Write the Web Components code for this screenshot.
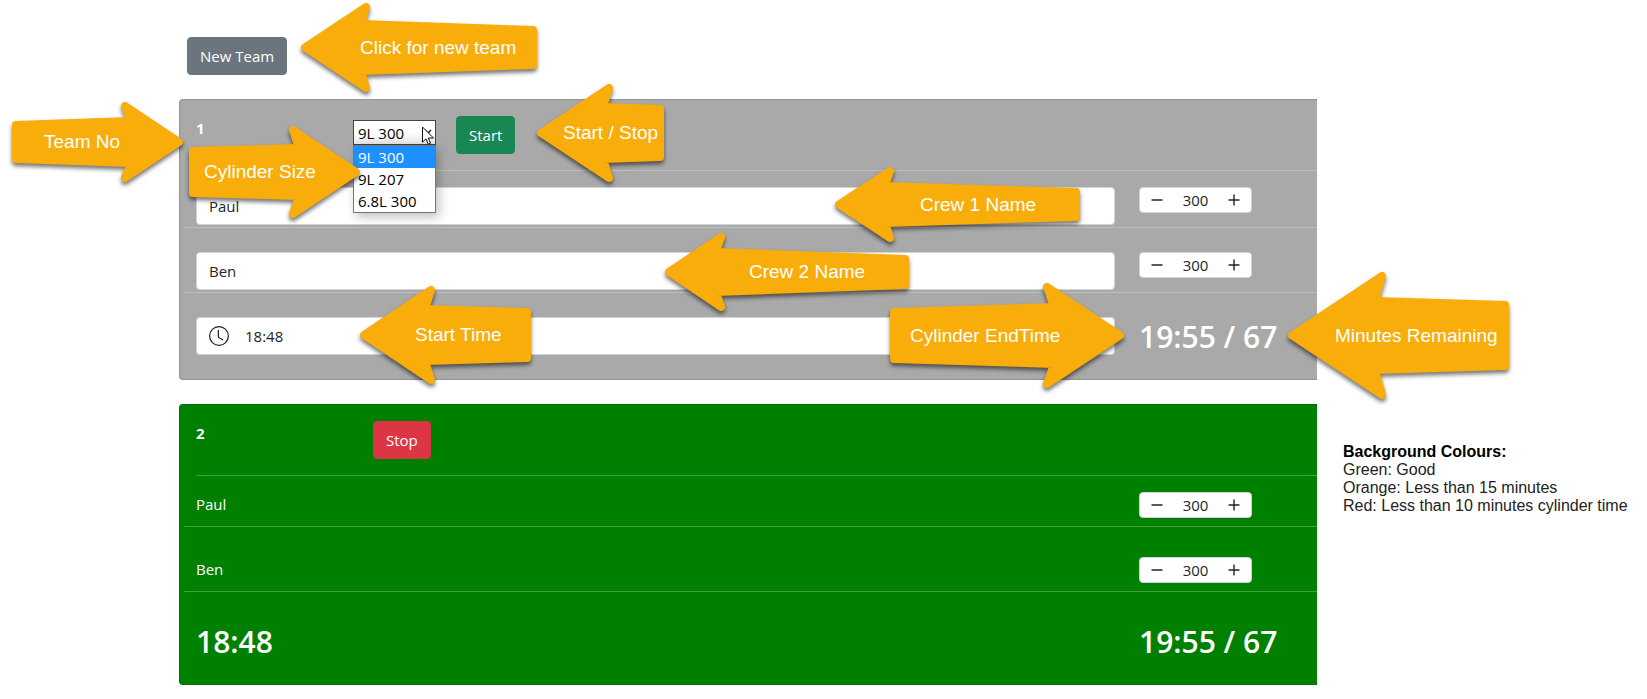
<!DOCTYPE html>
<html lang="en">
<head>
<meta charset="utf-8">
<title>Team cylinder timers</title>
<style>
  body { margin: 0; background: #fff; color: #212529; font: 15px/24px "Open Sans", "Noto Sans", sans-serif; }
</style>
</head>
<body>
<team-board>
  <action-button slot="toolbar" kind="secondary">New Team</action-button>

  <team-card number="1" state="idle">
    <cylinder-select slot="cylinder"></cylinder-select>
    <action-button slot="action" kind="success">Start</action-button>
    <text-field slot="crew1" label="Crew 1 name" value="Paul"></text-field>
    <pressure-stepper slot="pressure1" value="300" label="Crew 1 pressure"></pressure-stepper>
    <text-field slot="crew2" label="Crew 2 name" value="Ben"></text-field>
    <pressure-stepper slot="pressure2" value="300" label="Crew 2 pressure"></pressure-stepper>
    <text-field slot="start" label="Start time" value="18:48" icon="clock"></text-field>
    <big-time slot="end">19:55 / 67</big-time>
  </team-card>

  <team-card number="2" state="good">
    <action-button slot="action" kind="danger">Stop</action-button>
    <span slot="crew1">Paul</span>
    <pressure-stepper slot="pressure1" value="300" label="Crew 1 pressure"></pressure-stepper>
    <span slot="crew2">Ben</span>
    <pressure-stepper slot="pressure2" value="300" label="Crew 2 pressure"></pressure-stepper>
    <big-time slot="start">18:48</big-time>
    <big-time slot="end">19:55 / 67</big-time>
  </team-card>

  <colour-legend slot="aside"></colour-legend>

  <call-out slot="notes" points="left"  left="301" top="3"   width="236" height="89"  barb="69" notch="65" shoulder="17" tail="23" lead="59">Click for new team</call-out>
  <call-out slot="notes" points="right" left="12"  top="102" width="171" height="80"  barb="62" notch="57" shoulder="15" tail="19" lead="32">Team No</call-out>
  <call-out slot="notes" points="right" left="189" top="126" width="171" height="92"  barb="71" notch="66" shoulder="18" tail="21" lead="15">Cylinder Size</call-out>
  <call-out slot="notes" points="left"  left="537" top="84"  width="127" height="98"  barb="76" notch="71" shoulder="19" tail="21" lead="26">Start / Stop</call-out>
  <call-out slot="notes" points="left"  right="567" top="167" width="245" height="75" barb="59" notch="55" shoulder="15" tail="21" lead="85">Crew 1 Name</call-out>
  <call-out slot="notes" points="left"  right="738" top="233" width="244" height="78" barb="60" notch="56" shoulder="15" tail="22" lead="84">Crew 2 Name</call-out>
  <call-out slot="notes" points="left"  left="360" top="286" width="171" height="98"  barb="75" notch="70" shoulder="19" tail="22" lead="55">Start Time</call-out>
  <call-out slot="notes" points="right" right="523" top="283" width="234" height="105" barb="81" notch="75" shoulder="20" tail="25" lead="20">Cylinder EndTime</call-out>
  <call-out slot="notes" points="left"  right="138" top="272" width="221" height="127" barb="98" notch="92" shoulder="25" tail="29" lead="47">Minutes Remaining</call-out>
</team-board>

<script>
class BaseElement extends HTMLElement {
  render(html) {
    if (!this.shadowRoot) this.attachShadow({ mode: "open" });
    this.shadowRoot.innerHTML = html;
  }
  attr(name) { return this.getAttribute(name) || ""; }
  num(name) { return Number(this.getAttribute(name)); }
}

customElements.define("team-board", class extends BaseElement {
  connectedCallback() {
    this.render(`
      <style>
        :host { display: grid; grid-template-columns: minmax(0, 1fr) 330px; position: relative; padding: 37px 0 14px 179px; }
        main { display: flex; flex-direction: column; gap: 24px; min-width: 0; }
        .toolbar { display: flex; padding-left: 8px; }
        aside { padding: 405px 0 0 26px; }
      </style>
      <main>
        <div class="toolbar"><slot name="toolbar"></slot></div>
        <slot></slot>
      </main>
      <aside><slot name="aside"></slot></aside>
      <slot name="notes"></slot>`);
  }
});

customElements.define("action-button", class extends BaseElement {
  connectedCallback() {
    const colour = { secondary: "#6c757d", success: "#198754", danger: "#dc3545" }[this.attr("kind")];
    this.render(`
      <style>
        :host { display: inline-block; }
        button { display: block; border: 1px solid ${colour}; border-radius: 4px; background: ${colour};
          color: #fff; font: inherit; line-height: 24px; padding: 6px 12px; white-space: nowrap; }
      </style>
      <button type="button"><slot></slot></button>`);
  }
});

customElements.define("team-card", class extends BaseElement {
  connectedCallback() {
    const idle = this.attr("state") === "idle";
    this.render(`
      <style>
        :host { display: block; color: #fff; background: ${idle ? "#a9a9a9" : "#008000"};
          border: 1px solid rgba(0, 0, 0, .125); border-right: 0; border-radius: 4px 0 0 4px; padding: 16px 0 0 16px; }
        header { display: flex; align-items: flex-start; padding-bottom: 16px; border-bottom: 1px solid rgba(255, 255, 255, .25); margin-bottom: 16px; }
        h2 { margin: 0; flex: 0 0 157px; font-size: 15px; line-height: 24px; font-weight: 700; }
        .action { margin-left: 20px; }
        .row { display: grid; grid-template-columns: minmax(0, 1fr) 178px; column-gap: 24px; align-items: start;
          margin-left: -12px; padding-left: 12px; }
        .crew { height: ${idle ? 40 : 34}px; border-bottom: 1px solid rgba(255, 255, 255, .25); margin-bottom: ${idle ? 24 : 30}px; }
        .times { min-height: 62px; }
      </style>
      <header>
        <h2>${this.attr("number")}</h2>
        <slot name="cylinder"></slot>
        <div class="action"><slot name="action"></slot></div>
      </header>
      <div class="row crew"><slot name="crew1"></slot><slot name="pressure1"></slot></div>
      <div class="row crew"><slot name="crew2"></slot><slot name="pressure2"></slot></div>
      <div class="row times"><slot name="start"></slot><slot name="end"></slot></div>`);
  }
});

customElements.define("text-field", class extends BaseElement {
  connectedCallback() {
    const clock = this.attr("icon") === "clock" ? `
      <svg width="20" height="20" viewBox="0 0 16 16" fill="#212529" aria-hidden="true">
        <path d="M8 3.5a.5.5 0 0 0-1 0V9a.5.5 0 0 0 .252.434l3.5 2a.5.5 0 0 0 .496-.868L8 8.71V3.5z"/>
        <path d="M8 16A8 8 0 1 0 8 0a8 8 0 0 0 0 16zm7-8A7 7 0 1 1 1 8a7 7 0 0 1 14 0z"/>
      </svg>` : "";
    this.render(`
      <style>
        :host { display: block; }
        label { display: flex; align-items: center; gap: 16px; box-sizing: border-box; height: 38px;
          padding: 0 12px; background: #fff; border: 1px solid #ced4da; border-radius: 4px; }
        input { flex: 1; min-width: 0; border: 0; padding: 0; background: none; outline: 0; color: #212529; font: inherit; line-height: 24px; }
      </style>
      <label>${clock}<input type="text" aria-label="${this.attr("label")}" value="${this.attr("value")}"></label>`);
  }
});

customElements.define("pressure-stepper", class extends BaseElement {
  connectedCallback() {
    this.render(`
      <style>
        :host { display: flex; align-items: center; box-sizing: border-box; width: 113px; height: 26px;
          background: #fff; border: 1px solid #ced4da; border-radius: 4px; }
        button { flex: 0 0 34px; height: 24px; display: grid; place-items: center; padding: 0; border: 0; background: none; }
        input { flex: 1; min-width: 0; padding: 0; border: 0; background: none; outline: 0; text-align: center;
          color: #212529; font: inherit; line-height: 24px; }
        svg { stroke: #212529; stroke-width: 1.4; stroke-linecap: round; }
      </style>
      <button type="button" aria-label="Decrease"><svg width="12" height="12" viewBox="0 0 12 12"><path d="M1 6h10"/></svg></button>
      <input type="text" inputmode="numeric" aria-label="${this.attr("label")}" value="${this.attr("value")}">
      <button type="button" aria-label="Increase"><svg width="12" height="12" viewBox="0 0 12 12"><path d="M1 6h10M6 1v10"/></svg></button>`);
  }
});

customElements.define("big-time", class extends BaseElement {
  connectedCallback() {
    this.render(`
      <style>:host { display: block; font-size: 30px; line-height: 40px; font-weight: 600; white-space: nowrap; }</style>
      <slot></slot>`);
  }
});

customElements.define("cylinder-select", class extends BaseElement {
  connectedCallback() {
    this.render(`
      <style>
        :host { display: block; position: relative; width: 83px; margin-top: 4px; color: #000; }
        select { appearance: none; display: block; box-sizing: border-box; width: 100%; height: 25px; margin: 0; padding: 1px 4px 0;
          border: 1px solid #444; border-radius: 0; outline: 0; background: linear-gradient(#fff 50%, #e6e6e6); color: #000; font: inherit; line-height: 22px; }
        ul { position: absolute; z-index: 1; left: 0; right: 0; top: 25px; margin: 0; padding: 0; list-style: none;
          background: #fff; border: 1px solid #767676; box-shadow: 3px 4px 10px rgba(0, 0, 0, .25); }
        li { padding: 0 4px; line-height: 22px; white-space: nowrap; }
        li[aria-selected=true] { background: #1e90ff; color: #fff; }
        svg { position: absolute; }
        .chevron { right: 4px; top: 8px; }
        .pointer { right: 1px; top: 6px; }
      </style>
      <select aria-label="Cylinder size"><option>9L 300</option><option>9L 207</option><option>6.8L 300</option></select>
      <svg class="chevron" width="8" height="8" viewBox="0 0 8 8" fill="none" stroke="#222" stroke-width="1.5"><path d="M1 2l3 3 3-3"/></svg>
      <svg class="pointer" width="13" height="19" viewBox="0 0 13 19" aria-hidden="true">
        <path d="M.5 1v15.2l3.5-3.4 2.2 5.4 2.3-1-2.2-5.2h5.2z" fill="#fff" stroke="#111"/>
      </svg>
      <ul role="listbox" aria-label="Cylinder size options">
        <li role="option" aria-selected="true">9L 300</li>
        <li role="option" aria-selected="false">9L 207</li>
        <li role="option" aria-selected="false">6.8L 300</li>
      </ul>`);
  }
});

customElements.define("colour-legend", class extends BaseElement {
  connectedCallback() {
    this.render(`
      <style>
        :host { display: block; font: 16px/18px "Liberation Sans", Arial, sans-serif; color: #222; white-space: nowrap; }
        h3 { margin: 0; font-size: 16px; line-height: 19px; color: #000; }
        p { margin: 0; }
      </style>
      <h3>Background Colours:</h3>
      <p>Green: Good</p>
      <p>Orange: Less than 15 minutes</p>
      <p>Red: Less than 10 minutes cylinder time</p>`);
  }
});

/* Annotation arrow: the outline is a polygon whose corners are rounded by a wide stroke. */
customElements.define("call-out", class extends BaseElement {
  connectedCallback() {
    const w = this.num("width"), h = this.num("height"), r = 4;
    const barb = this.num("barb") - r, notch = this.num("notch") - r - 1;
    const shoulder = this.num("shoulder") + r, tail = this.num("tail") + r;
    const half = [[barb, r], [notch, shoulder], [w - r, tail]];
    let pts = [[r, h / 2], ...half, ...half.slice().reverse().map(([x, y]) => [x, h - y])];
    if (this.attr("points") === "right") pts = pts.map(([x, y]) => [w - x, y]);
    const side = this.hasAttribute("right") ? "right" : "left";
    this.render(`
      <style>
        :host { position: absolute; z-index: 2; ${side}: ${this.num(side)}px; top: ${this.num("top")}px;
          display: grid; align-items: center; width: ${w}px; height: ${h}px;
          color: #fff; font: 19px/24px "Liberation Sans", Arial, sans-serif; white-space: nowrap; }
        svg, span { grid-area: 1 / 1; }
        svg { overflow: visible; filter: drop-shadow(0 3px 2px rgba(0, 0, 0, .55)); }
        span { position: relative; padding-left: ${this.num("lead")}px; }
      </style>
      <svg width="${w}" height="${h}" aria-hidden="true">
        <polygon points="${pts.map(p => p.join()).join(" ")}" fill="#f8ad0b" stroke="#f8ad0b" stroke-width="${2 * r}" stroke-linejoin="round"/>
      </svg>
      <span><slot></slot></span>`);
  }
});
</script>
</body>
</html>
